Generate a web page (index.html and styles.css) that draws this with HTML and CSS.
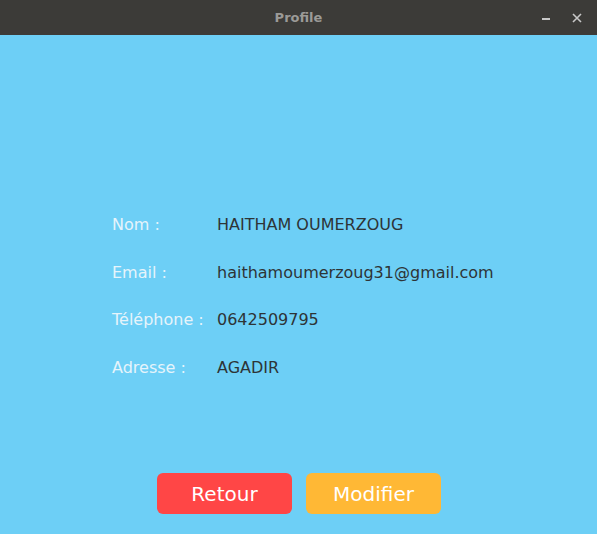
FILE: index.html
```html
<!DOCTYPE html>
<html>
<head>
<meta charset="utf-8">
<link rel="stylesheet" href="styles.css">
</head>
<body>
<div class="window">
  <header class="titlebar">
    <span class="title">Profile</span>
    <div class="controls">
      <span class="min"></span>
      <svg class="close" width="10" height="10" viewBox="0 0 10 10"><path d="M1 1 L9 9 M9 1 L1 9" stroke="#c8c8c8" stroke-width="1.6"/></svg>
    </div>
  </header>
  <main class="content">
    <div class="info">
      <span class="label">Nom :</span><span class="value">HAITHAM OUMERZOUG</span>
      <span class="label">Email :</span><span class="value">haithamoumerzoug31@gmail.com</span>
      <span class="label">Téléphone :</span><span class="value">0642509795</span>
      <span class="label">Adresse :</span><span class="value">AGADIR</span>
    </div>
    <div class="buttons">
      <button class="btn retour">Retour</button>
      <button class="btn modifier">Modifier</button>
    </div>
  </main>
</div>
</body>
</html>
```
FILE: styles.css
```css
html, body {
  margin: 0;
  padding: 0;
  height: 100%;
  font-family: "DejaVu Sans", sans-serif;
}
.window {
  display: flex;
  flex-direction: column;
  height: 534px;
  width: 597px;
}
.titlebar {
  height: 35px;
  background: #3c3b38;
  display: flex;
  align-items: center;
  justify-content: center;
  position: relative;
  flex-shrink: 0;
}
.title {
  color: #9b9a97;
  font-weight: bold;
  font-size: 13px;
  margin-top: -1px;
}
.controls {
  position: absolute;
  right: 15px;
  top: 0;
  height: 35px;
  display: flex;
  align-items: center;
  gap: 22px;
}
.min {
  width: 8px;
  height: 1.5px;
  background: #c8c8c8;
  margin-top: 3px;
}
.close {
  display: block;
}
.content {
  flex: 1;
  background: #6dcff6;
  display: flex;
  flex-direction: column;
  padding-top: 180px;
  box-sizing: border-box;
}
.info {
  display: grid;
  grid-template-columns: 105px auto;
  row-gap: 27.5px;
  margin-left: 112px;
  font-size: 16px;
  line-height: 20px;
}
.label {
  color: #e6f4fb;
}
.value {
  color: #2e3436;
}
.buttons {
  margin-top: auto;
  margin-bottom: 20px;
  display: flex;
  justify-content: center;
  gap: 14px;
  margin-left: 1px;
}
.btn {
  width: 135px;
  height: 41px;
  border: none;
  border-radius: 6px;
  color: #ffffff;
  font-family: "DejaVu Sans", sans-serif;
  font-size: 20px;
  padding: 0;
}
.retour {
  background: #ff4646;
}
.modifier {
  background: #ffb835;
}
```
